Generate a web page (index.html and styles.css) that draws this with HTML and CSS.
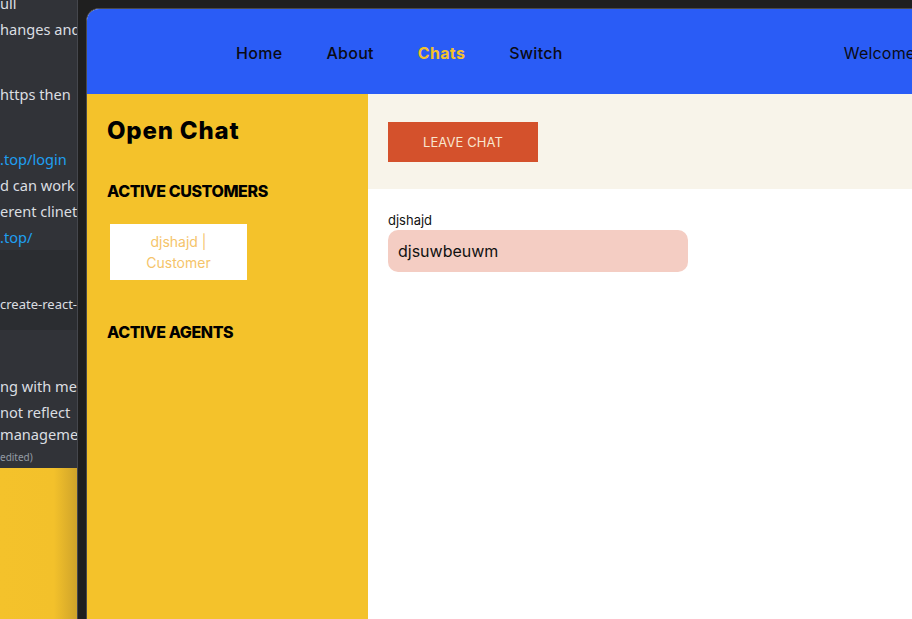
FILE: index.html
```html
<!DOCTYPE html>
<html lang="en">
<head>
<meta charset="utf-8">
<title>Open Chat</title>
<link rel="stylesheet" href="styles.css">
</head>
<body>
<div class="desk">
  <aside class="discord">
    <div class="msgs">
      <div class="ln first">ull</div>
      <div class="ln">hanges and a</div>
      <div class="ln para">https then</div>
      <div class="ln para link">.top/login</div>
      <div class="ln">d can work w</div>
      <div class="ln">erent clinet</div>
      <div class="ln link">.top/</div>
    </div>
    <div class="code"><span>create-react-app</span></div>
    <div class="msgs second">
      <div class="ln">ng with mess</div>
      <div class="ln">not reflect</div>
      <div class="ln tight">managemen</div>
      <div class="edited">edited)</div>
    </div>
    <div class="preview"></div>
  </aside>
  <div class="gutter"></div>
  <main class="browser">
    <header class="topbar">
      <nav class="nav">
        <a class="nav-link">Home</a>
        <a class="nav-link">About</a>
        <a class="nav-link active">Chats</a>
        <a class="nav-link">Switch</a>
      </nav>
      <span class="welcome">Welcome</span>
    </header>
    <div class="app">
      <section class="sidebar">
        <h1 class="title">Open Chat</h1>
        <h2 class="sub">ACTIVE CUSTOMERS</h2>
        <div class="card">djshajd |<br>Customer</div>
        <h2 class="sub agents">ACTIVE AGENTS</h2>
      </section>
      <section class="chat">
        <div class="chat-top">
          <button class="leave">LEAVE CHAT</button>
        </div>
        <div class="messages">
          <div class="author">djshajd</div>
          <div class="bubble">djsuwbeuwm</div>
        </div>
      </section>
    </div>
  </main>
</div>
</body>
</html>
```
FILE: styles.css
```css
* { box-sizing: border-box; }
html, body { margin: 0; padding: 0; }
body {
  width: 912px;
  height: 619px;
  overflow: hidden;
  background: #1f1f1f;
}
.desk {
  display: flex;
  height: 619px;
}
.discord {
  width: 78px;
  flex: none;
  background: #313338;
  border-right: 1px solid #45474d;
  display: flex;
  flex-direction: column;
  overflow: hidden;
  font-family: "Noto Sans", "Open Sans", sans-serif;
  font-size: 14.6px;
  color: #dbdee1;
}
.ln {
  height: 26px;
  line-height: 26px;
  white-space: nowrap;
  overflow: hidden;
}
.ln.first { margin-top: -10px; }
.ln.para { margin-top: 39px; }
.ln.link { color: #1f9ff0; }
.code {
  height: 80px;
  background: #2b2d31;
  display: flex;
  align-items: flex-end;
  padding-bottom: 17px;
  white-space: nowrap;
  font-family: "Noto Sans", sans-serif;
  font-size: 13px;
  color: #dbdee1;
  overflow: hidden;
}
.second { padding-top: 43px; }
.ln.tight { height: 23px; line-height: 23px; margin-top: -2px; }
.edited {
  font-size: 10px;
  color: #949ba4;
  line-height: 14px;
  margin-top: 4px;
  height: 18px;
}
.preview {
  flex: 1;
  background: linear-gradient(90deg, #f4c22b 0%, #f3c12b 70%, #cfa32a 100%);
}
.gutter {
  width: 8px;
  flex: none;
  background: #1f1f1f;
}
.browser {
  flex: none;
  width: 826px;
  margin-top: 8px;
  border-left: 1px solid #4a4a4a;
  border-top: 1px solid #4a4a4a;
  border-top-left-radius: 13px;
  overflow: hidden;
  display: flex;
  flex-direction: column;
  font-family: "Inter", "Noto Sans", sans-serif;
  background: #fff;
}
.topbar {
  height: 85px;
  flex: none;
  background: #2a5cf6;
  display: flex;
  align-items: center;
  padding-left: 149px;
  padding-top: 2px;
  white-space: nowrap;
}
.nav {
  display: flex;
  gap: 44px;
}
.nav-link {
  font-size: 16px;
  font-weight: 500;
  color: #0b0b14;
  letter-spacing: 0.3px;
}
.nav-link.active {
  color: #f4c22b;
  font-weight: 700;
}
.welcome {
  margin-left: 281px;
  font-size: 16px;
  color: #0b0b14;
  letter-spacing: 0.2px;
}
.app {
  flex: 1;
  display: flex;
}
.sidebar {
  width: 281px;
  flex: none;
  background: #f4c22b;
  padding: 19px 20px 0 20px;
}
.title {
  margin: 0;
  font-size: 24px;
  line-height: 36px;
  font-weight: 800;
  color: #000;
  letter-spacing: 0.8px;
}
.sub {
  margin: 0;
  margin-top: 30px;
  font-size: 16px;
  line-height: 24px;
  font-weight: 800;
  color: #000;
  letter-spacing: -0.4px;
}
.card {
  margin: 21px 0 0 3px;
  width: 137px;
  height: 56px;
  background: #fff;
  color: #f5c46a;
  font-size: 14px;
  line-height: 21px;
  text-align: center;
  padding-top: 7px;
}
.sub.agents { margin-top: 40px; }
.chat {
  flex: 1;
  display: flex;
  flex-direction: column;
}
.chat-top {
  height: 95px;
  background: #f8f4ea;
  padding: 28px 20px 0 20px;
}
.leave {
  width: 150px;
  height: 40px;
  border: none;
  background: #d4512c;
  color: #f8e6cf;
  font-family: "Inter", "Noto Sans", sans-serif;
  font-size: 13px;
  letter-spacing: 0.1px;
  cursor: pointer;
}
.messages {
  padding: 23px 20px 0 20px;
}
.author {
  font-size: 13px;
  line-height: 16px;
  color: #111;
}
.bubble {
  margin-top: 2px;
  width: 300px;
  height: 42px;
  border-radius: 10px;
  background: #f4cdc3;
  color: #111;
  font-size: 16px;
  line-height: 42px;
  padding-left: 10px;
}
```
